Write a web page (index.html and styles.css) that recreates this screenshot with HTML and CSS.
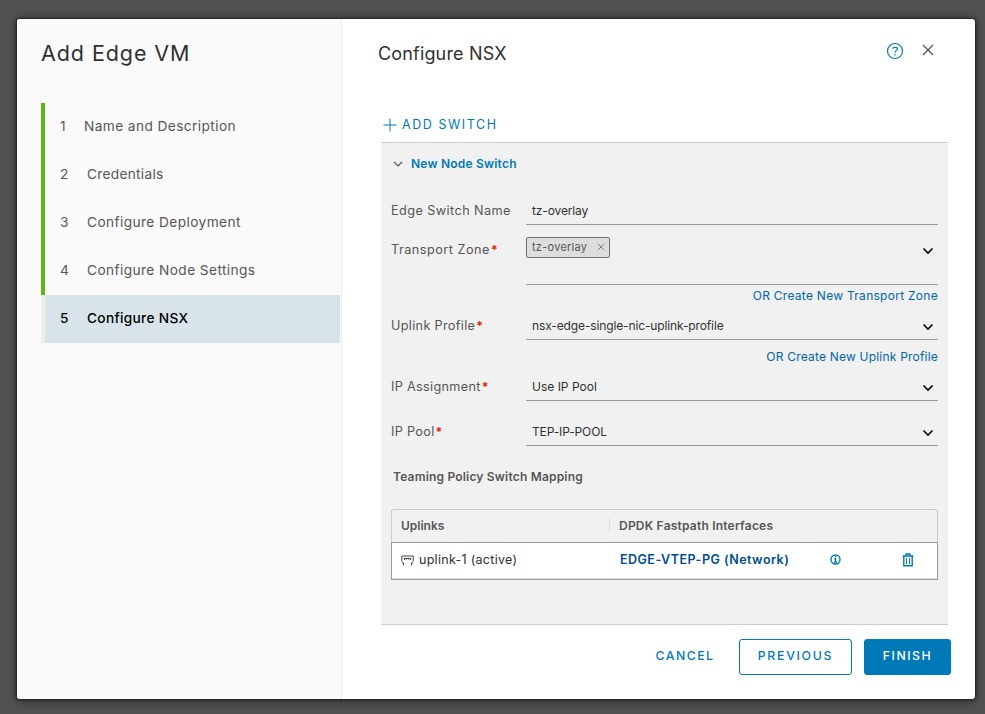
FILE: index.html
```html
<!DOCTYPE html>
<html lang="en">
<head>
<meta charset="utf-8">
<title>Add Edge VM</title>
<link rel="stylesheet" href="styles.css">
</head>
<body>
<div class="modal">
  <aside class="sidebar">
    <h1 class="wizard-title">Add Edge VM</h1>
    <ol class="steps">
      <li class="step done first"><span class="num">1</span><span>Name and Description</span></li>
      <li class="step done credentials"><span class="num">2</span><span>Credentials</span></li>
      <li class="step done"><span class="num">3</span><span>Configure Deployment</span></li>
      <li class="step done"><span class="num">4</span><span>Configure Node Settings</span></li>
      <li class="step current"><span class="num">5</span><span>Configure NSX</span></li>
    </ol>
  </aside>
  <main class="main">
    <header class="page-head">
      <h2 class="page-title">Configure NSX</h2>
      <svg class="help" viewBox="0 0 18 18" width="18" height="18"><circle cx="9" cy="9" r="7.5"/><path d="M6.5 6.6Q7.3 5.3 9 5.3Q11.5 5.3 11.5 7Q11.5 8.1 10 8.8Q9 9.3 9 10.8M9 12V13.4"/></svg>
      <svg class="close" viewBox="0 0 12 12" width="12" height="12"><path d="M1 1L11 11M11 1L1 11"/></svg>
    </header>
    <a class="add-switch"><svg viewBox="0 0 14 14" width="14" height="14"><path d="M7 .5V13.5M.5 7H13.5"/></svg><span>ADD SWITCH</span></a>
    <section class="panel">
      <div class="panel-head"><svg class="fold" viewBox="0 0 10 6" width="10" height="6"><path d="M1 1L5 5L9 1"/></svg><span>New Node Switch</span></div>
      <div class="row name-row"><label class="label">Edge Switch Name</label><div class="field"><span class="tight">tz-overlay</span></div></div>
      <div class="row zone-row"><label class="label wide">Transport Zone<b>*</b></label>
        <div class="field zone"><span class="tag"><span>tz-overlay</span><svg viewBox="0 0 8 8" width="8" height="8"><path d="M.8 .8L7.2 7.2M7.2 .8L.8 7.2"/></svg></span><svg class="caret" viewBox="0 0 12 8" width="12" height="8"><path d="M1.5 1.5L6 6L10.5 1.5"/></svg></div></div>
      <div class="create zone-create"><a>OR Create New Transport Zone</a></div>
      <div class="row"><label class="label narrow">Uplink Profile<b>*</b></label><div class="field"><span class="tight">nsx-edge-single-nic-uplink-profile</span><svg class="caret" viewBox="0 0 12 8" width="12" height="8"><path d="M1.5 1.5L6 6L10.5 1.5"/></svg></div></div>
      <div class="create uplink-create"><a>OR Create New Uplink Profile</a></div>
      <div class="row"><label class="label narrow">IP Assignment<b>*</b></label><div class="field"><span>Use IP Pool</span><svg class="caret" viewBox="0 0 12 8" width="12" height="8"><path d="M1.5 1.5L6 6L10.5 1.5"/></svg></div></div>
      <div class="row pool-row"><label class="label narrow">IP Pool<b>*</b></label><div class="field"><span class="tight">TEP-IP-POOL</span><svg class="caret" viewBox="0 0 12 8" width="12" height="8"><path d="M1.5 1.5L6 6L10.5 1.5"/></svg></div></div>
      <h3 class="mapping-title">Teaming Policy Switch Mapping</h3>
      <div class="grid">
        <div class="grid-head"><div class="col-a">Uplinks</div><div class="col-b">DPDK Fastpath Interfaces</div></div>
        <div class="grid-row">
          <div class="uplink"><svg viewBox="0 0 13 11" width="13" height="11"><path d="M.8 6.5V1H12.2V6.5M.8 7.8H2.5V10.5M12.2 7.8H10.5V10.5"/><path d="M3.4 3V5M5.4 3V4.6M7.6 3V4.6M9.6 3V5M3 3.4H10"/></svg><span>uplink-1 (active)</span></div>
          <a class="network">EDGE-VTEP-PG (Network)</a>
          <svg class="info" viewBox="0 0 11 11" width="11" height="11"><circle cx="5.5" cy="5.5" r="4.5"/><path d="M5.5 2V3.3M4.3 4.8H5.5V8M4 8.1H7"/></svg>
          <svg class="trash" viewBox="0 0 12 14" width="12" height="14"><path d="M.5 3H11.5M4 2.8V1H8V2.8M1.8 3V12.8H10.2V3"/><path class="slats" d="M4.5 5V11M7.5 5V11"/></svg>
        </div>
      </div>
    </section>
    <footer class="footer">
      <button class="btn cancel">CANCEL</button>
      <button class="btn previous">PREVIOUS</button>
      <button class="btn finish">FINISH</button>
    </footer>
  </main>
</div>
</body>
</html>
```
FILE: styles.css
```css
* { box-sizing: border-box; }
body { margin: 0; height: 714px; padding: 19px 10px 15px 17px; background: #515151; font-family: Inter, "Open Sans", sans-serif; color: #313131; overflow: hidden; }
h1, h2, h3, ol { margin: 0; padding: 0; font-weight: 400; }
svg { fill: none; stroke: currentColor; flex: none; }
.modal { display: flex; width: 958px; height: 680px; border-radius: 3px; background: #fff; box-shadow: 0 1px 9px 1px rgba(0, 0, 0, .5), 0 0 2px 1px rgba(0, 0, 0, .4); }
.sidebar { width: 325px; background: #fafafa; border-right: 1px solid #ececec; border-radius: 3px 0 0 3px; padding: 20px 0 0 24px; }
.wizard-title { height: 64px; font-size: 21.5px; line-height: 29px; letter-spacing: .917px; }
.steps { list-style: none; width: 299px; }
.step { display: flex; align-items: center; height: 48px; padding: 0 0 2px 15px; border-left: 4px solid #60b515; font-size: 13.7px; letter-spacing: .41px; color: #565656; }
.num { width: 27px; }
.first .num { width: 24px; }
.credentials { letter-spacing: .29px; }
.current { background: #d9e4ea; border-color: #eee; color: #000; font-weight: 500; letter-spacing: .31px; }
.main { flex: 1; padding: 20px 24px 0 36px; }
.page-head { display: flex; height: 82px; align-items: flex-start; }
.page-title { flex: 1; font-size: 18px; line-height: 30px; letter-spacing: .164px; }
.help { margin: 3px 18px 0 0; color: #0079b8; stroke-width: 1.2; }
.close { margin: 5px 17px 0 0; color: #565656; stroke-width: 1.3; }
.add-switch { display: flex; align-items: center; gap: 5px; height: 21px; margin-left: 5px; padding-bottom: 14px; color: #0079b8; font-size: 12.5px; letter-spacing: 1.556px; }
.panel { width: 567px; height: 483px; margin-left: 3px; padding: 0 10px; background: #f1f1f1; border-top: 1px solid #ccc; border-bottom: 1px solid #ccc; }
.panel-head { display: flex; align-items: center; height: 42px; padding-left: 2px; gap: 8px; font-size: 12px; font-weight: 600; letter-spacing: .205px; color: #0079b8; }
.panel-head span { padding-bottom: 2px; }
.fold { color: #565656; stroke-width: 1.2; }
.row { display: flex; height: 28px; }
.label { width: 135px; line-height: 27px; font-size: 12.7px; letter-spacing: .415px; color: #565656; }
.wide { line-height: 26px; letter-spacing: .49px; }
.narrow { letter-spacing: .31px; }
.label b { margin-left: 1px; color: #e12200; font-size: 12px; line-height: 1; }
.field { display: flex; align-items: center; justify-content: space-between; width: 412px; padding: 0 4px 0 6px; border-bottom: 1px solid #9a9a9a; font-size: 12px; }
.field .caret { position: relative; top: 1px; }
.tight { letter-spacing: -.13px; }
.name-row, .zone-row { margin-top: 12px; }
.zone-row { height: 48px; }
.zone { align-items: flex-start; padding: 0 4px 0 0; }
.zone .caret { margin-top: 9px; }
.caret { color: #000; stroke-width: 1.6; }
.tag { display: flex; align-items: center; gap: 10px; width: 84px; height: 21px; padding: 0 0 1px 5px; border: 1px solid #737373; border-radius: 2px; background: #ddd; color: #565656; font-size: 11px; letter-spacing: .259px; }
.tag svg { color: #777; stroke-width: .9; }
.create { display: flex; justify-content: flex-end; height: 23px; line-height: 22px; margin-bottom: 4px; font-size: 12px; letter-spacing: .277px; color: #0065ab; }
.uplink-create { height: 33px; line-height: 33px; margin: 0; letter-spacing: .204px; }
.pool-row { margin-top: 17px; }
.mapping-title { height: 63px; padding-left: 2px; line-height: 62px; font-size: 12px; font-weight: 600; letter-spacing: .189px; color: #565656; }
.grid-head { display: flex; align-items: center; height: 33px; padding-bottom: 1px; border: 1px solid #ccc; border-bottom: 0; border-radius: 3px 3px 0 0; font-size: 12px; font-weight: 600; color: #565656; }
.col-a { width: 217px; padding-left: 9px; }
.col-b { padding-left: 9px; line-height: 15px; border-left: 1px solid #ddd; letter-spacing: .213px; }
.grid-row { display: flex; align-items: center; height: 38px; padding: 0 0 3px 9px; border: 1px solid #9a9a9a; background: #fff; box-shadow: inset 0 -1px #ddd; font-size: 12.5px; letter-spacing: .284px; }
.uplink { display: flex; align-items: center; gap: 5px; width: 219px; }
.uplink svg { color: #444; margin-top: 2px; }
.network { width: 210px; color: #004f8f; font-weight: 600; letter-spacing: .472px; }
.info { width: 11px; color: #0079b8; stroke-width: 1.4; }
.trash { margin-left: 60.5px; color: #0079b8; stroke-width: 1.4; }
.slats { stroke-width: 1; }
.footer { display: flex; justify-content: flex-end; margin-top: 14px; }
.btn { height: 36px; padding: 0 0 4px; border: 1px solid #0079b8; border-radius: 3px; background: #fff; color: #0079b8; font: 500 12.3px Inter, sans-serif; letter-spacing: 1.5px; }
.cancel { width: 84px; border-color: transparent; margin-right: 12px; }
.previous { width: 113px; margin-right: 12px; letter-spacing: 1.7px; }
.finish { width: 87px; background: #0079b8; color: #fff; }
```
